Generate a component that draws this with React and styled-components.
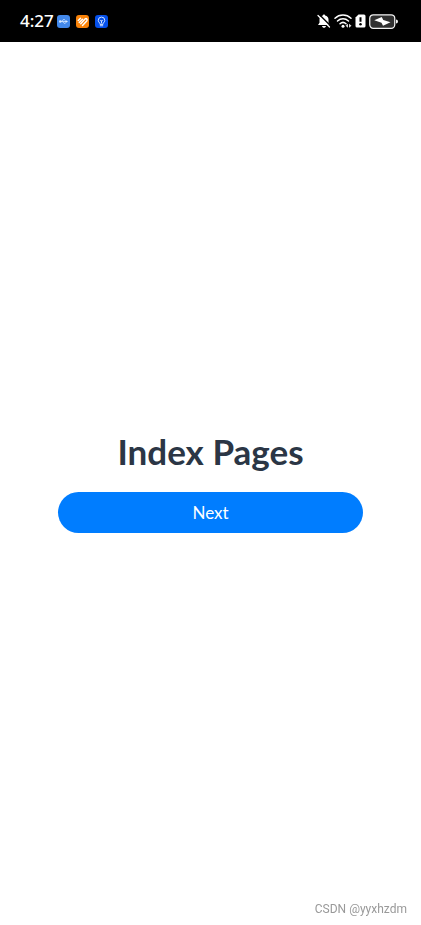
import React from 'react'
import styled, { createGlobalStyle } from 'styled-components'

const App = () => {
    return (
        <Page>
            <GlobalStyle />
            <StatusBar>
                <StatusGroup>
                    <Time>4:27</Time>
                    <AppIcons>
                        <UsbIcon />
                        <HealthIcon />
                        <TipsIcon />
                    </AppIcons>
                </StatusGroup>
                <SystemIcons>
                    <MutedBellIcon />
                    <WifiIcon />
                    <SimAlertIcon />
                    <BatteryIcon />
                </SystemIcons>
            </StatusBar>
            <Content>
                <Title>Index Pages</Title>
                <NextButton type='button'>Next</NextButton>
            </Content>
            <Watermark>CSDN @yyxhzdm</Watermark>
        </Page>
    )
}

export default App

const UsbIcon = () => (
    <svg width='13' height='13' viewBox='0 0 26 26' aria-hidden='true'>
        <rect width='26' height='26' rx='6' fill='#4288ea' />
        <g stroke='#dcebff' strokeWidth='1.5' fill='none'>
            <path d='M6 13h13M9 13l3-3.5h4M11 13l3 3.5h3' />
        </g>
        <circle cx='6.5' cy='13' r='2.5' fill='#dcebff' />
        <path d='M17 10l5 3-5 3z' fill='#dcebff' />
    </svg>
)

const HealthIcon = () => (
    <svg width='13' height='13' viewBox='0 0 26 26' aria-hidden='true'>
        <rect width='26' height='26' rx='6' fill='#f98208' />
        <g stroke='#fff' strokeWidth='3' fill='none' strokeLinecap='round' strokeLinejoin='round'>
            <path d='M4.5 11L9 6.500M6.500 15L13 8.500' />
            <path d='M9.500 17.500l8.500-9.500c3-2 5.500 1 3.500 4L13 21' />
        </g>
    </svg>
)

const TipsIcon = () => (
    <svg width='13' height='13' viewBox='0 0 26 26' aria-hidden='true'>
        <rect width='26' height='26' rx='6' fill='#0550ea' />
        <g stroke='#e6f0ff' strokeWidth='1.800' fill='none' strokeLinecap='round'>
            <path d='M10 18v-1.500c-2-1.300-3.500-3.200-3.500-5.800a6.500 6.500 0 0 1 13 0c0 2.600-1.500 4.500-3.500 5.800V18z' />
            <path d='M10.500 21.500h5M13 16v-4M11 10.500l2 2 2-2' />
        </g>
    </svg>
)

const MutedBellIcon = () => (
    <svg width='14' height='14' viewBox='0 0 28 28' aria-hidden='true'>
        <path d='M14 1c1.300 0 2.200.9 2.200 2.200 4.400.9 6.800 3.800 6.800 8v6.300l3 4.500H2l3-4.500v-6.300c0-4.200 2.400-7.100 6.800-8 0-1.300.9-2.200 2.200-2.200z' fill='#fff' />
        <path d='M10 24h8c-.5 2.500-2 3.500-4 3.500s-3.500-1-4-3.500z' fill='#fff' />
        <path d='M5 1.500l23 23' stroke='#000' strokeWidth='3' />
        <path d='M2 3l23 23' stroke='#fff' strokeWidth='2.500' strokeLinecap='round' />
    </svg>
)

const WifiIcon = () => (
    <svg width='18' height='14' viewBox='0 0 36 28' aria-hidden='true'>
        <g stroke='#fff' strokeWidth='3' fill='none' strokeLinecap='round'>
            <path d='M2 8.500c9-8.500 23-8.500 32 0' />
            <path d='M7 14c6.500-6 15.500-6 22 0' />
            <path d='M12 19.500c3.500-3.500 8.500-3.500 12 0' />
        </g>
        <circle cx='18' cy='24.500' r='3' fill='#fff' />
        <path d='M28 19.500v8l-5-4zM30 19.500v8l5-4z' fill='#ddd' />
    </svg>
)

const SimAlertIcon = () => (
    <svg width='11' height='14' viewBox='0 0 22 28' aria-hidden='true'>
        <path d='M7 1h11a3 3 0 0 1 3 3v20a3 3 0 0 1-3 3H4a3 3 0 0 1-3-3V7z' fill='#fff' />
        <path d='M11 6.500v9' stroke='#000' strokeWidth='4' />
        <circle cx='11' cy='20.500' r='2.500' fill='#000' />
    </svg>
)

const BatteryIcon = () => (
    <svg width='29' height='15' viewBox='0 0 58 30' aria-hidden='true'>
        <rect x='1.500' y='1.500' width='50' height='27' rx='7' fill='#303030' stroke='#f2f2f2' strokeWidth='2.500' />
        <path d='M54 11q4 0 4 4t-4 4z' fill='#f2f2f2' />
        <path d='M10.500 12.500L25.500 6l3 6 14.500 4.500L28 23.500l-3-6z' fill='#fff' />
    </svg>
)

const GlobalStyle = createGlobalStyle`
    * {
        box-sizing: border-box;
    }

    body {
        margin: 0;
        background: #fff;
        font-family: Lato, "Open Sans", sans-serif;
    }
`

const Page = styled.div`
    min-height: 100vh;
    display: flex;
    flex-direction: column;
`

const StatusBar = styled.header`
    height: 42px;
    padding: 0 23px 0 20px;
    display: flex;
    align-items: center;
    justify-content: space-between;
    background: #000;
    color: #fff;
`

const StatusGroup = styled.div`
    display: flex;
    align-items: center;
    gap: 3px;
`

const Time = styled.time`
    font-family: "Noto Sans", sans-serif;
    font-size: 17px;
    font-weight: 500;
    line-height: 24px;
`

const AppIcons = styled.div`
    display: flex;
    gap: 6px;
`

const SystemIcons = styled.div`
    display: flex;
    align-items: center;
    gap: 3px;
`

const Content = styled.main`
    flex: 1;
    padding: 0 58px;
    display: flex;
    flex-direction: column;
    justify-content: center;
    gap: 24px;
`

const Title = styled.h1`
    margin: 0;
    color: #2b3645;
    font-size: 35px;
    font-weight: 700;
    line-height: 34px;
    text-align: center;
`

const NextButton = styled.button`
    height: 41px;
    border: none;
    border-radius: 21px;
    background: #007dff;
    color: #fff;
    font-family: inherit;
    font-size: 17px;
    cursor: pointer;
`

const Watermark = styled.small`
    position: fixed;
    right: 14px;
    bottom: 8px;
    color: #999;
    font-family: Roboto, sans-serif;
    font-size: 12px;
    line-height: 16px;
`
